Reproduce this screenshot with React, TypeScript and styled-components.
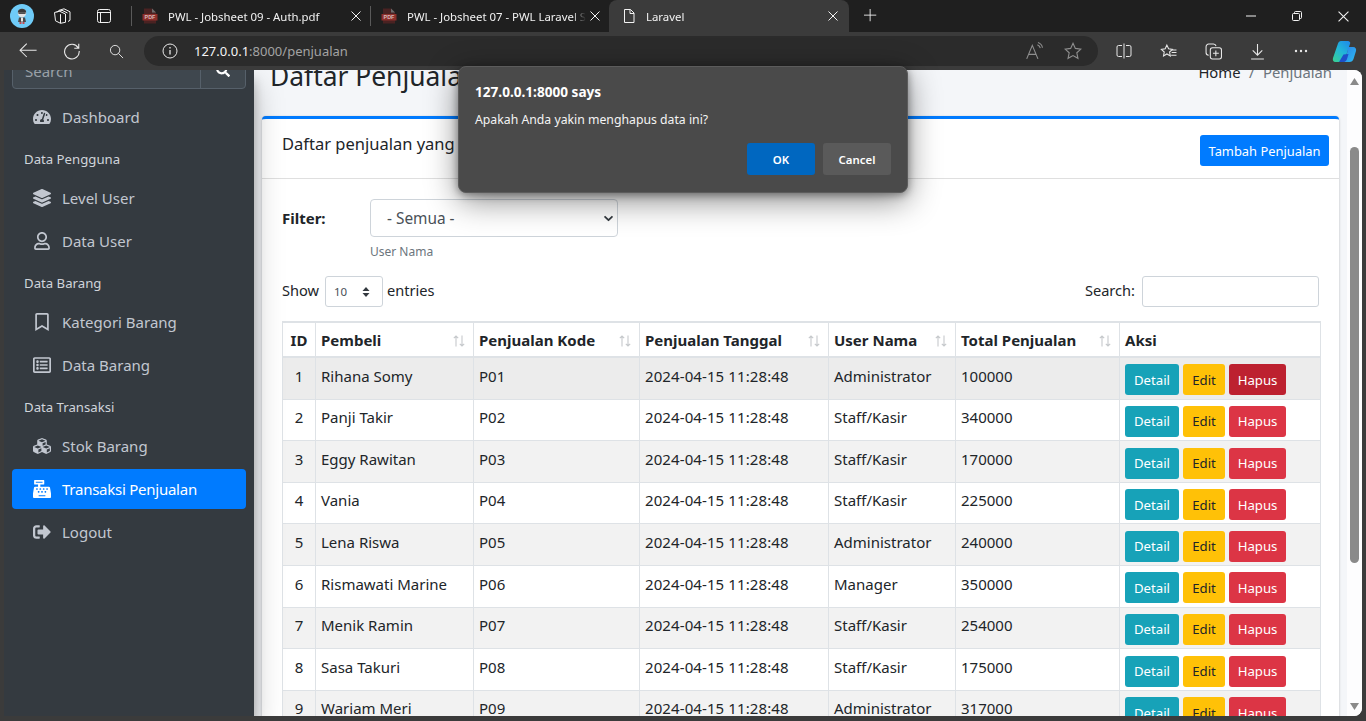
import React from "react";
import styled, { createGlobalStyle } from "styled-components";
import {
  FaTachometerAlt, FaLayerGroup, FaRegUser, FaRegBookmark, FaRegListAlt,
  FaCubes, FaCashRegister, FaSignOutAlt, FaSearch,
} from "react-icons/fa";

const Global = createGlobalStyle`
  html, body { margin: 0; padding: 0; height: 100%; overflow: hidden; background: #3b3b3b; }
  * { box-sizing: border-box; }
  body { font-family: "Noto Sans", "Open Sans", sans-serif; color: #212529; }
`;

const Shell = styled.div`
  position: relative;
  width: 1366px; height: 721px;
  display: flex; flex-direction: column;
  background: #3b3b3b; overflow: hidden;
`;

/* ---------- browser chrome ---------- */
const TabStrip = styled.div`
  height: 32px; flex: none; background: #1f1f1f;
  display: flex; align-items: stretch; color: #f2f2f2;
`;
const Avatar = styled.div`
  width: 24px; height: 24px; border-radius: 50%; background: #6fcbf7;
  margin: 4px 0 0 10px; flex: none; display: flex; align-items: center; justify-content: center;
`;
const StripIcon = styled.div<{ $w: number }>`
  width: ${p => p.$w}px; flex: none; display: flex; align-items: center; justify-content: center;
`;
const TabSep = styled.div`
  width: 1px; height: 20px; background: #5a5a5a; margin-top: 6px; flex: none;
`;
const Tab = styled.div<{ $active?: boolean; $w: number }>`
  width: ${p => p.$w}px; flex: none; display: flex; align-items: center;
  padding: 0 9px 0 10px; font-size: 11.4px; letter-spacing: 0;
  white-space: nowrap; overflow: hidden;
  ${p => p.$active ? "background:#3b3b3b;border-radius:8px 8px 0 0;padding:0 11px 0 12px;" : ""}
`;
const TabTitle = styled.span<{ $gap?: number }>`
  flex: 1; overflow: hidden; margin-left: ${p => p.$gap ?? 10}px; min-width: 0; margin-right: 4px;
  -webkit-mask-image: linear-gradient(to right, #000 calc(100% - 14px), transparent);
  mask-image: linear-gradient(to right, #000 calc(100% - 14px), transparent);
`;
const StripSpacer = styled.div` flex: 1; `;
const WinBtn = styled.div`
  width: 46px; flex: none; display: flex; align-items: center; justify-content: center;
`;
const Toolbar = styled.div`
  height: 38px; flex: none; background: #3b3b3b;
  display: flex; align-items: center; color: #e8e8e8;
`;
const ToolBtn = styled.div<{ $w: number; $dim?: boolean }>`
  width: ${p => p.$w}px; height: 30px; flex: none;
  display: flex; align-items: center; justify-content: center;
  ${p => (p.$dim ? "color:#8e8e8e;" : "")}
`;
const Omni = styled.div`
  width: 954px; height: 30px; flex: none; background: #2b2b2b; border-radius: 15px;
  margin-right: 4px; padding-right: 6px; display: flex; align-items: center; font-size: 13px;
`;
const Url = styled.div`
  flex: 1; margin-left: -2px; color: #a3a3a3;
  b { font-weight: 400; color: #f5f5f5; }
`;

/* ---------- viewport ---------- */
const Viewport = styled.div`
  height: 646px; flex: none; margin: 0 4px 0 4px; display: flex;
  background: #f4f6f9; overflow: hidden; border-radius: 0 8px 8px 0;
`;
const Sidebar = styled.aside`
  width: 250px; flex: none; background: #343a40; padding: 0 8px;
  box-shadow: 0 14px 28px rgba(0,0,0,.25), 0 10px 10px rgba(0,0,0,.22);
  position: relative; z-index: 1;
`;
const SearchGroup = styled.div`
  margin-top: -19px; height: 38px; display: flex;
  background: #3f474e; border: 1px solid #56606a; border-radius: 4px;
  color: #9aa1a8; font-size: 15px; margin-bottom: 8px;
`;
const SearchText = styled.div`
  width: 188px; padding-left: 12px; line-height: 38px; border-right: 1px solid #56606a;
`;
const SearchBtn = styled.div`
  flex: 1; display: flex; align-items: center; justify-content: center; color: #fff; font-size: 14px;
`;
const NavHead = styled.div`
  height: 38px; padding: 10px 0 0 12px; font-size: 13.2px; line-height: 18px; color: #d0d4db;
`;
const NavItem = styled.div<{ $active?: boolean }>`
  height: 40px; margin-bottom: 3px; border-radius: 4px;
  display: flex; align-items: center; padding-left: 20px; font-size: 15px;
  color: ${p => (p.$active ? "#fff" : "#c2c7d0")};
  background: ${p => (p.$active ? "#007bff" : "transparent")};
  ${p => (p.$active ? "letter-spacing: -0.25px;" : "")}
`;
const NavIcon = styled.span`
  width: 20px; margin-right: 10px; display: flex; justify-content: center; font-size: 18px;
`;

const Main = styled.main` flex: 1; min-width: 0; `;
const ContentHead = styled.div`
  margin-top: -11px; height: 57px; padding: 0 15px 0 16px;
  display: flex; justify-content: space-between; align-items: flex-start;
`;
const Title = styled.h1`
  margin: 0; font-size: 26.4px; font-weight: 400; line-height: 34px;
`;
const Crumbs = styled.div`
  margin-top: 1px; font-size: 14.8px; line-height: 24px; color: #6c757d;
  span { color: #212529; }
  i { font-style: normal; margin: 0 8.5px; }
`;
const Card = styled.section`
  margin: 0 8px; background: #fff; border-top: 3px solid #007bff; border-radius: 4px;
  box-shadow: 0 0 1px rgba(0,0,0,.125), 0 1px 3px rgba(0,0,0,.2);
`;
const CardHead = styled.div`
  height: 60px; padding: 12px 10px 0 20px; border-bottom: 1px solid #dfdfdf;
  display: flex; justify-content: space-between; align-items: flex-start;
`;
const CardTitle = styled.div` font-size: 16.5px; line-height: 26px; `;
const AddBtn = styled.div`
  margin-top: 4px; height: 31px; width: 129px; border-radius: 3px; background: #007bff; color: #fff;
  font-size: 12.9px; display: flex; align-items: center; justify-content: center;
`;
const CardBody = styled.div` padding: 20px 18px 0 20px; `;
const FilterRow = styled.div` display: flex; `;
const FilterLabel = styled.label`
  width: 88px; font-weight: 700; font-size: 15px; line-height: 38px;
`;
const chevron = `url("data:image/svg+xml,%3csvg xmlns='http://www.w3.org/2000/svg' viewBox='0 0 16 16'%3e%3cpath fill='none' stroke='%23343a40' stroke-linecap='round' stroke-linejoin='round' stroke-width='2.6' d='M3 5.5l5 5 5-5'/%3e%3c/svg%3e")`;
const updown = `url("data:image/svg+xml,%3csvg xmlns='http://www.w3.org/2000/svg' viewBox='0 0 8 10'%3e%3cpath fill='%23343a40' d='M4 0L.5 4h7zM4 10L.5 6h7z'/%3e%3c/svg%3e")`;
const FilterSelect = styled.select`
  appearance: none; width: 248px; height: 38px; display: block;
  border: 1px solid #ced4da; border-radius: 4px; padding: 0 16px; outline: none;
  background: #fff ${chevron} no-repeat right 3px center / 11px 11px;
  font: 15.4px "Noto Sans", sans-serif; color: #495057;
`;
const Caption = styled.div`
  font-size: 12px; line-height: 18px; margin-top: 6px; color: #6c757d;
`;
const LengthRow = styled.div`
  margin-top: 15px; display: flex; justify-content: space-between; align-items: center;
  height: 31px; padding-right: 2px; font-size: 14.6px;
`;
const Inline = styled.div` display: flex; align-items: center; `;
const LenLabel = styled.span` margin-bottom: 4px; `;
const LenSelect = styled.select`
  appearance: none; width: 58px; height: 31px; margin: 0 4px 0 6px;
  border: 1px solid #ced4da; border-radius: 3px; padding: 0 0 0 8px; outline: none;
  background: #fff ${updown} no-repeat right 12px center / 8px 10px;
  font: 11.5px "Noto Sans", sans-serif; color: #495057;
`;
const SearchInput = styled.input`
  width: 177px; height: 31px; margin-left: 7px; border: 1px solid #ced4da; border-radius: 3px; outline: none;
`;
const Table = styled.div`
  margin-top: 14px; width: 1039px; border-left: 1px solid #dee2e6; border-top: 2px solid #dee2e6;
`;
const cols = "33px 158px 166px 189px 127px 164px 201px";
const HeadRow = styled.div`
  display: grid; grid-template-columns: ${cols}; height: 35px; border-bottom: 2px solid #dee2e6;
`;
const Th = styled.div<{ $center?: boolean }>`
  position: relative; border-right: 1px solid #dee2e6; font-weight: 700; font-size: 15px; line-height: 35px;
  padding: 0 5px; ${p => (p.$center ? "text-align:center;padding:0;" : "")}
`;
const SortMark = styled.svg`
  position: absolute; right: 8px; top: 12px;
`;
const Row = styled.div<{ $bg: string }>`
  display: grid; grid-template-columns: ${cols}; height: 41.6px;
  background: ${p => p.$bg}; border-bottom: 1px solid #dee2e6;
`;
const Td = styled.div<{ $center?: boolean }>`
  border-right: 1px solid #dee2e6; font-size: 15px; line-height: 24px; padding: 5.6px 5px 0;
  white-space: nowrap; overflow: hidden;
  ${p => (p.$center ? "text-align:center;" : "")}
`;
const DateTd = styled(Td)` letter-spacing: 0.1px; `;
const Actions = styled.div`
  border-right: 1px solid #dee2e6; padding: 6.4px 5px 0; display: flex; gap: 4px; align-items: flex-start;
`;
const ActBtn = styled.div<{ $w: number; $bg: string; $fg: string }>`
  width: ${p => p.$w}px; height: 31px; background: ${p => p.$bg}; color: ${p => p.$fg};
  border-radius: 3px; font-size: 13.2px; display: flex; align-items: center; justify-content: center;
`;

/* ---------- scrollbar ---------- */
const ScrollTrack = styled.div`
  width: 15px; flex: none; background: #fdfdfe; position: relative;
  display: flex; flex-direction: column; align-items: center; justify-content: space-between;
  padding: 8px 0 6px;
`;
const ScrollThumb = styled.div`
  position: absolute; left: 3px; top: 77px; width: 9px; height: 416px; border-radius: 5px; background: #8a8a8a;
`;

/* ---------- dialog ---------- */
const Dialog = styled.div`
  position: absolute; left: 458px; top: 66px; width: 450px; height: 127px;
  background: #4a4a4a; border: 1px solid #5c5c5c; border-radius: 8px; color: #fff;
  box-shadow: 0 8px 32px rgba(0,0,0,.45), 0 2px 8px rgba(0,0,0,.4);
  padding: 16px 16px 0; z-index: 5;
`;
const DlgTitle = styled.div` font-weight: 700; font-size: 13.6px; line-height: 18px; `;
const DlgText = styled.div` margin-top: 10px; font-size: 12.25px; line-height: 18px; color: #f4f4f4; `;
const DlgButtons = styled.div`
  margin-top: 14px; display: flex; justify-content: flex-end; gap: 8px;
`;
const DlgBtn = styled.div<{ $primary?: boolean }>`
  width: 68px; height: 32px; border-radius: 3px; font-size: 11.4px; font-weight: 600;
  display: flex; align-items: center; justify-content: center;
  background: ${p => (p.$primary ? "#0067c0" : "#5a5a5a")};
`;

/* ---------- drawings ---------- */
const S = (p: React.SVGProps<SVGSVGElement> & { s?: number }) => {
  const { s = 16, children, ...r } = p;
  return (
    <svg width={s} height={s} viewBox="0 0 16 16" fill="none" stroke="currentColor" strokeWidth={1} {...r}>
      {children}
    </svg>
  );
};
const PdfIcon = () => (
  <svg width="16" height="16" viewBox="0 0 16 16">
    <path d="M2 0.5h8l4 4v11H2z" fill="#4a2222" />
    <path d="M10 .5l4 4h-4z" fill="#6d6d6d" />
    <rect x="0.5" y="6" width="15" height="6.5" fill="#8c2f2b" />
    <text x="8" y="11.2" fontSize="5.4" fontWeight="700" fill="#d9b9b7" textAnchor="middle" fontFamily="Liberation Sans">PDF</text>
  </svg>
);
const CloseX = ({ s = 10, w = 1 }: { s?: number; w?: number }) => (
  <svg width={s} height={s} viewBox="0 0 10 10" stroke="currentColor" strokeWidth={w} style={{ flex: "none" }}>
    <path d="M.5.5l9 9M9.5.5l-9 9" />
  </svg>
);
const SortIcon = () => (
  <SortMark width="12" height="12" viewBox="0 0 12 12" stroke="#c6c9cc" strokeWidth="1.1" fill="none">
    <path d="M3 11.5V1M.8 3.2L3 1l2.2 2.2M9 .5V11M6.8 8.8L9 11l2.2-2.2" />
  </SortMark>
);

const rows: [string, string, string, string][] = [
  ["Rihana Somy", "P01", "Administrator", "100000"],
  ["Panji Takir", "P02", "Staff/Kasir", "340000"],
  ["Eggy Rawitan", "P03", "Staff/Kasir", "170000"],
  ["Vania", "P04", "Staff/Kasir", "225000"],
  ["Lena Riswa", "P05", "Administrator", "240000"],
  ["Rismawati Marine", "P06", "Manager", "350000"],
  ["Menik Ramin", "P07", "Staff/Kasir", "254000"],
  ["Sasa Takuri", "P08", "Staff/Kasir", "175000"],
  ["Wariam Meri", "P09", "Administrator", "317000"],
];

const headers = ["Pembeli", "Penjualan Kode", "Penjualan Tanggal", "User Nama", "Total Penjualan"];

export default function App() {
  return (
    <Shell>
      <Global />
      <TabStrip>
        <Avatar>
          <svg width="12" height="16" viewBox="0 0 12 16">
            <circle cx="6" cy="5" r="4.2" fill="#e4e4e4" />
            <path d="M1.800 4.500C2 1.500 4 .8 6 .8s4 .7 4.200 3.700z" fill="#3a3a3a" />
            <rect x="2.500" y="4.500" width="7" height="1.300" fill="#2a2a2a" />
            <path d="M3 9.500h6l1 4.500H2z" fill="#4a4a4a" />
            <path d="M5 9.500h2v4H5z" fill="#e9e9e9" />
            <path d="M3.500 14h2v2h-2zM6.500 14h2v2h-2z" fill="#c8494c" />
          </svg>
        </Avatar>
        <StripIcon $w={52} style={{ marginLeft: 2 }}>
          <svg width="18" height="16" viewBox="0 0 18 16" fill="none" stroke="currentColor">
            <path d="M5.500 2.500L11 .8l6 3v8.500l-2 1.200" />
            <path d="M3.500 4L9 2.300l5.500 2.700" />
            <path d="M1 5l5-1.300 6 2.800v8.300l-5 1-5-2.500z" transform="translate(.5 -.5)" />
            <path d="M7.500 6.200v9" />
          </svg>
        </StripIcon>
        <StripIcon $w={32} style={{ marginRight: 11 }}>
          <S s={16}>
            <rect x="1.500" y="1.500" width="13" height="13" rx="2" />
            <path d="M1.500 4.500h13M4.500 4.500v10" />
          </S>
        </StripIcon>
        <TabSep />
        <Tab $w={238}>
          <PdfIcon />
          <TabTitle>PWL - Jobsheet 09 - Auth.pdf</TabTitle>
          <CloseX />
        </Tab>
        <TabSep />
        <Tab $w={238}>
          <PdfIcon />
          <TabTitle>PWL - Jobsheet 07 - PWL Laravel Starter Code</TabTitle>
          <CloseX />
        </Tab>
        <Tab $w={240} $active>
          <S s={16}>
            <path d="M3.500 1.500h6l3.500 3.500v9.500h-9.500z" />
            <path d="M9 1.500v4h4" />
          </S>
          <TabTitle $gap={9}>Laravel</TabTitle>
          <CloseX />
        </Tab>
        <StripIcon $w={44}>
          <S s={14}>
            <path d="M7 0v14M0 7h14" />
          </S>
        </StripIcon>
        <StripSpacer />
        <WinBtn>
          <svg width="10" height="2" viewBox="0 0 10 2" stroke="currentColor"><path d="M0 1h10" /></svg>
        </WinBtn>
        <WinBtn>
          <svg width="10" height="10" viewBox="0 0 10 10" fill="none" stroke="currentColor">
            <rect x=".5" y="2.500" width="7" height="7" rx="1" />
            <path d="M2.500 2.500V1.500a1 1 0 011-1h5a1 1 0 011 1v5a1 1 0 01-1 1h-1" />
          </svg>
        </WinBtn>
        <WinBtn>
          <CloseX s={11} />
        </WinBtn>
      </TabStrip>

      <Toolbar>
        <ToolBtn $w={56}>
          <S s={18}><path d="M17 8H1M7.500 1.500L1 8l6.500 6.500" transform="scale(.92)" /></S>
        </ToolBtn>
        <ToolBtn $w={32}>
          <S s={18}><path d="M13.500 5.200A6.500 6.500 0 1014.400 8M14 1.500v4h-4" /></S>
        </ToolBtn>
        <ToolBtn $w={56}>
          <S s={15}><circle cx="6.500" cy="6.500" r="5" /><path d="M10 10l5 5" /></S>
        </ToolBtn>
        <Omni>
          <ToolBtn $w={52}>
            <S s={16}><circle cx="8" cy="8" r="7" /><path d="M8 7v4.500M8 4v1.500" strokeWidth="1.3" /></S>
          </ToolBtn>
          <Url><b>127.0.0.1</b>:8000/penjualan</Url>
          <ToolBtn $w={39} $dim>
            <S s={18}>
              <path d="M1.500 15L6.500 3l5 12M3.200 11h6.600" />
              <path d="M11 2.500c1.500.6 2.300 1.600 2.600 3M11.500 .5c2.400.8 3.700 2.300 4 4.600" />
            </S>
          </ToolBtn>
          <ToolBtn $w={39} $dim>
            <S s={18}><path d="M8 1.200l2.100 4.500 4.900.6-3.600 3.300 1 4.900L8 12.100l-4.400 2.400 1-4.900L1 6.300l4.900-.6z" /></S>
          </ToolBtn>
        </Omni>
        <ToolBtn $w={44}>
          <S s={16}>
            <path d="M6 2.500H2.500a1.500 1.500 0 00-1.500 1.500v8a1.500 1.500 0 001.500 1.500H6" />
            <path d="M10 2.500h3.500A1.500 1.500 0 0115 4v8a1.500 1.500 0 01-1.500 1.500H10" />
            <path d="M8 .5v15" />
          </S>
        </ToolBtn>
        <ToolBtn $w={45}>
          <S s={17}>
            <path d="M6.500 2l1.600 3.500 3.600.5-2.700 2.500.7 3.700-3.200-1.900-3.200 1.900.7-3.700L1.300 6l3.600-.5z" />
            <path d="M11 6.500h4.500M11 9h4.500M10.500 11.500h5" />
          </S>
        </ToolBtn>
        <ToolBtn $w={44}>
          <S s={17}>
            <path d="M3.500 11.500A2.500 2.500 0 011 9V3.500A2.500 2.500 0 013.500 1H8a2.500 2.500 0 012.400 2" />
            <rect x="5" y="4.500" width="10.500" height="10.500" rx="2" />
            <path d="M10.200 7v5.500M7.500 9.700h5.500" />
          </S>
        </ToolBtn>
        <ToolBtn $w={44}>
          <S s={17}><path d="M8 1v10.500M3.500 7L8 11.500 12.500 7M2 15h12" /></S>
        </ToolBtn>
        <ToolBtn $w={43}>
          <svg width="14" height="4" viewBox="0 0 14 4" fill="currentColor">
            <circle cx="2" cy="2" r="1.200" /><circle cx="7" cy="2" r="1.200" /><circle cx="12" cy="2" r="1.200" />
          </svg>
        </ToolBtn>
        <ToolBtn $w={45}>
          <svg width="25" height="23" viewBox="0 0 25 23">
            <defs>
              <linearGradient id="cpA" x1="0" y1="1" x2="0.8" y2="0">
                <stop offset="0" stopColor="#3ad28e" /><stop offset=".55" stopColor="#22b6d8" /><stop offset="1" stopColor="#1f8fe8" />
              </linearGradient>
              <linearGradient id="cpB" x1="0" y1="0" x2="1" y2="1">
                <stop offset="0" stopColor="#2b7fe8" /><stop offset="1" stopColor="#2dbcf0" />
              </linearGradient>
            </defs>
            <path d="M9 1h7c1.500 0 2 1 2.300 2L13 19c-.6 2-2 3-4 3H3.500C1 22 .5 20 1 18L6 3.500C6.500 2 7.500 1 9 1z" fill="url(#cpA)" />
            <path d="M16 7h5c2.500 0 3.500 2 3 4l-2.500 8c-.6 2-2 3-4 3h-7c2 0 3-1 3.600-3z" fill="url(#cpB)" />
            <path d="M7 22h4c2 0 3.500-1 4-3l1.500-5-5 .5z" fill="#1d4fc9" />
          </svg>
        </ToolBtn>
      </Toolbar>

      <Viewport>
        <Sidebar>
          <SearchGroup>
            <SearchText>Search</SearchText>
            <SearchBtn><FaSearch /></SearchBtn>
          </SearchGroup>
          <NavItem><NavIcon><FaTachometerAlt /></NavIcon>Dashboard</NavItem>
          <NavHead>Data Pengguna</NavHead>
          <NavItem><NavIcon><FaLayerGroup /></NavIcon>Level User</NavItem>
          <NavItem><NavIcon><FaRegUser /></NavIcon>Data User</NavItem>
          <NavHead>Data Barang</NavHead>
          <NavItem><NavIcon><FaRegBookmark /></NavIcon>Kategori Barang</NavItem>
          <NavItem><NavIcon><FaRegListAlt /></NavIcon>Data Barang</NavItem>
          <NavHead>Data Transaksi</NavHead>
          <NavItem><NavIcon><FaCubes /></NavIcon>Stok Barang</NavItem>
          <NavItem $active><NavIcon><FaCashRegister /></NavIcon>Transaksi Penjualan</NavItem>
          <NavItem><NavIcon><FaSignOutAlt /></NavIcon>Logout</NavItem>
        </Sidebar>

        <Main>
          <ContentHead>
            <Title>Daftar Penjualan</Title>
            <Crumbs><span>Home</span><i>/</i>Penjualan</Crumbs>
          </ContentHead>
          <Card>
            <CardHead>
              <CardTitle>Daftar penjualan yang terdaftar dalam sistem</CardTitle>
              <AddBtn>Tambah Penjualan</AddBtn>
            </CardHead>
            <CardBody>
              <FilterRow>
                <FilterLabel>Filter:</FilterLabel>
                <div>
                  <FilterSelect defaultValue="">
                    <option value="">- Semua -</option>
                  </FilterSelect>
                  <Caption>User Nama</Caption>
                </div>
              </FilterRow>
              <LengthRow>
                <Inline>
                  <LenLabel>Show</LenLabel>
                  <LenSelect defaultValue="10"><option>10</option></LenSelect>
                  <LenLabel>entries</LenLabel>
                </Inline>
                <Inline>
                  <LenLabel>Search:</LenLabel>
                  <SearchInput />
                </Inline>
              </LengthRow>
              <Table>
                <HeadRow>
                  <Th $center>ID</Th>
                  {headers.map(h => (
                    <Th key={h}>{h}<SortIcon /></Th>
                  ))}
                  <Th>Aksi</Th>
                </HeadRow>
                {rows.map((r, i) => (
                  <Row key={r[1]} $bg={i === 0 ? "#ececec" : i % 2 === 0 ? "#f2f2f2" : "#fff"}>
                    <Td $center>{i + 1}</Td>
                    <Td>{r[0]}</Td>
                    <Td>{r[1]}</Td>
                    <DateTd>2024-04-15 11:28:48</DateTd>
                    <Td>{r[2]}</Td>
                    <Td>{r[3]}</Td>
                    <Actions>
                      <ActBtn $w={54} $bg="#17a2b8" $fg="#fff">Detail</ActBtn>
                      <ActBtn $w={42} $bg="#ffc107" $fg="#212529">Edit</ActBtn>
                      <ActBtn $w={57} $bg={i === 0 ? "#bd2130" : "#dc3545"} $fg="#fff">Hapus</ActBtn>
                    </Actions>
                  </Row>
                ))}
              </Table>
            </CardBody>
          </Card>
        </Main>

        <ScrollTrack>
          <svg width="9" height="7" viewBox="0 0 9 7" fill="#8a8a8a"><path d="M4.500 0L9 7H0z" /></svg>
          <ScrollThumb />
          <svg width="9" height="7" viewBox="0 0 9 7" fill="#8a8a8a"><path d="M4.500 7L9 0H0z" /></svg>
        </ScrollTrack>
      </Viewport>

      <Dialog>
        <DlgTitle>127.0.0.1:8000 says</DlgTitle>
        <DlgText>Apakah Anda yakin menghapus data ini?</DlgText>
        <DlgButtons>
          <DlgBtn $primary>OK</DlgBtn>
          <DlgBtn>Cancel</DlgBtn>
        </DlgButtons>
      </Dialog>
    </Shell>
  );
}
